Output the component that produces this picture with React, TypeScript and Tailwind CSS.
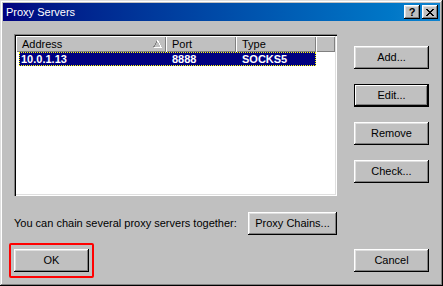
import React from 'react';

const raised =
  'shadow-[inset_-1px_-1px_#000,inset_1px_1px_#fff,inset_-2px_-2px_#808080,inset_2px_2px_#dfdfdf]';

function Btn({
  label,
  w = 'w-[75px]',
  isDefault = false,
}: {
  label: string;
  w?: string;
  isDefault?: boolean;
}) {
  return (
    <button
      className={`${w} h-[23px] bg-[#c0c0c0] flex items-center justify-center text-[11px] text-black ${
        isDefault
          ? 'border border-black shadow-[inset_-1px_-1px_#000,inset_1px_1px_#fff,inset_-2px_-2px_#808080]'
          : raised
      }`}
    >
      {label}
    </button>
  );
}

function SortArrow() {
  return (
    <svg width="9" height="8" viewBox="0 0 9 8" className="shrink-0">
      <path d="M4.5 0.5 L0.5 7.5" stroke="#808080" strokeWidth="1" fill="none" shapeRendering="crispEdges" />
      <path d="M4.5 0.5 L8.5 7.5 M0.5 7.5 H8.5" stroke="#fff" strokeWidth="1" fill="none" shapeRendering="crispEdges" />
    </svg>
  );
}

const header = 'h-[16px] flex items-center pl-[6px] shadow-[inset_1px_1px_#fff,inset_-1px_-1px_#808080]';

function ListView() {
  return (
    <div className="w-[323px] h-[162px] bg-white p-[2px] shadow-[inset_1px_1px_#808080,inset_2px_2px_#000,inset_-1px_-1px_#fff,inset_-2px_-2px_#dfdfdf]">
      <div className="flex bg-[#c0c0c0] h-[16px]">
        <div className={`${header} w-[150px] justify-between pr-[4px]`}>
          <span>Address</span>
          <SortArrow />
        </div>
        <div className={`${header} w-[70px]`}>Port</div>
        <div className={`${header} w-[80px]`}>Type</div>
        <div className={`${header} flex-1`} />
      </div>
      <div className="ml-[3px] w-[297px] h-[14px] flex items-center bg-[#000080] text-white font-bold border border-dotted border-[#ffff00]">
        <div className="w-[146px] pl-[1px]">10.0.1.13</div>
        <div className="w-[70px] pl-[6px]">8888</div>
        <div className="flex-1 pl-[6px]">SOCKS5</div>
      </div>
    </div>
  );
}

function CaptionButton({ children }: { children: React.ReactNode }) {
  return (
    <div className="w-[16px] h-[14px] bg-[#c0c0c0] flex items-center justify-center shadow-[inset_-1px_-1px_#000,inset_1px_1px_#fff,inset_-2px_-2px_#808080,inset_2px_2px_#dfdfdf]">
      {children}
    </div>
  );
}

export default function App() {
  return (
    <div
      className={`w-[443px] h-[286px] bg-[#c0c0c0] p-[3px] flex flex-col font-['Liberation_Sans',Arial,sans-serif] text-[11px] text-black leading-none shadow-[inset_-1px_-1px_#000,inset_1px_1px_#dfdfdf,inset_-2px_-2px_#808080,inset_2px_2px_#fff]`}
    >
      <div className="h-[18px] flex items-center justify-between pl-[3px] pr-[2px] bg-linear-to-r from-[#000080] to-[#1084d0]">
        <span className="text-white text-[11px]">Proxy Servers</span>
        <div className="flex gap-[2px]">
          <CaptionButton>
            <span className="font-bold text-[11px] leading-none mt-[1px]">?</span>
          </CaptionButton>
          <CaptionButton>
            <svg width="8" height="7" viewBox="0 0 8 7" shapeRendering="crispEdges">
              <path
                d="M0 0h2v1h-2zM6 0h2v1h-2zM1 1h2v1h-2zM5 1h2v1h-2zM2 2h4v1h-4zM3 3h2v1h-2zM2 4h4v1h-4zM1 5h2v1h-2zM5 5h2v1h-2zM0 6h2v1h-2zM6 6h2v1h-2z"
                fill="#000"
              />
            </svg>
          </CaptionButton>
        </div>
      </div>

      <div className="flex pl-[11px] pt-[13px]">
        <ListView />
        <div className="ml-[17px] mt-[12px] flex flex-col gap-[15px]">
          <Btn label="Add..." />
          <Btn label="Edit..." isDefault />
          <Btn label="Remove" />
          <Btn label="Check..." />
        </div>
      </div>

      <div className="ml-[11px] mt-[16px] w-[323px] flex items-center justify-between">
        <span>You can chain several proxy servers together:</span>
        <Btn label="Proxy Chains..." w="w-[89px]" />
      </div>

      <div className="mt-[14px] pl-[11px] pr-[11px] flex justify-between">
        <div className="relative">
          <Btn label="OK" />
          <span className="absolute -left-[5px] -top-[6px] w-[85px] h-[35px] border-2 border-[#ff0000] rounded-[2px] pointer-events-none" />
        </div>
        <Btn label="Cancel" />
      </div>
    </div>
  );
}
